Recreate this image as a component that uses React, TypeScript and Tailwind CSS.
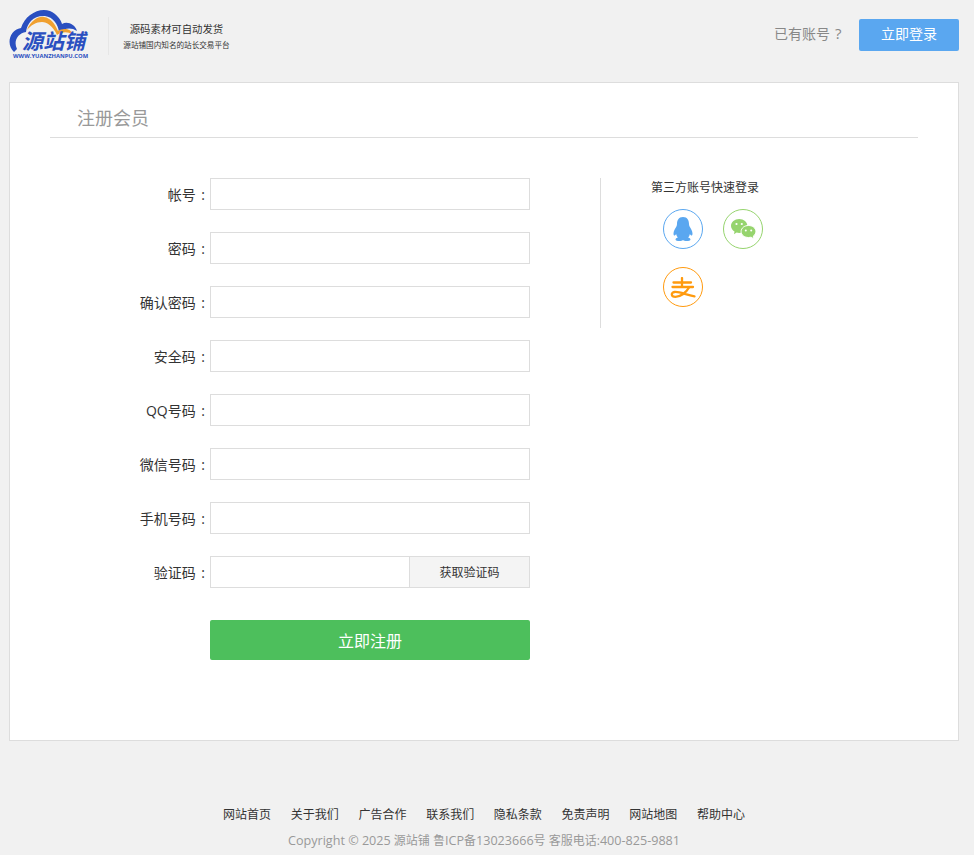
import React from "react";

function Row({ label, children }: { label: string; children?: React.ReactNode }) {
  return (
    <div className="flex h-[32px] mb-[22px]">
      <label className="w-[200px] pr-[5px] pt-[1px] text-right text-[14px] leading-[32px] text-[#333]">
        {label}<span className="ml-[2px]"> :</span>
      </label>
      {children ?? <input className="w-[320px] h-[32px] border border-[#ddd] bg-white" />}
    </div>
  );
}

const links = ["网站首页", "关于我们", "广告合作", "联系我们", "隐私条款", "免责声明", "网站地图", "帮助中心"];

export default function App() {
  return (
    <div className="min-h-[855px] bg-[#f1f1f1] font-['Open_Sans','Noto_Sans_CJK_SC',sans-serif]">
      <header className="h-[82px] flex items-start pl-[9px] pr-[15px]">
        <div className="relative w-[80px] h-[52px] mt-[8px] shrink-0">
          <svg width="80" height="52" viewBox="0 0 80 52" className="absolute left-0 top-0">
            <path d="M5 44 C-3 37 0 22 12 20 C16 7 30 -1 41 3 C48 6 52 12 53 16 C58 13 66 16 68 23 C62 19 56 20 50 24 C49 16 44 9 36 8 C25 7 18 15 17 24 C9 25 4 33 8 41 Z" fill="#2a4fc0" />
            <path d="M18 22 C22 12 30 8 35 9 C42 10 46 16 49 23 C54 20 62 20 64 27 C58 23 53 24 48 27 C44 18 38 14 33 14 C27 14 22 17 18 22 Z" fill="#f0a030" />
          </svg>
          <span className="absolute left-[13px] top-[25px] whitespace-nowrap text-[21px] leading-[17px] font-bold italic text-[#2a4fc0]">源站铺</span>
          <span className="absolute left-[4px] top-[45px] whitespace-nowrap text-[5.8px] leading-[6px] font-bold text-[#2a4fc0]">WWW.YUANZHANPU.COM</span>
        </div>
        <div className="w-px h-[38px] bg-[#e6e6e6] mt-[17px] ml-[19px]" />
        <div className="w-[121px] ml-[7px] mt-[21px] text-center text-[#333]">
          <div className="text-[10.4px] leading-[17px] whitespace-nowrap">源码素材可自动发货</div>
          <div className="text-[7.6px] leading-[12px] whitespace-nowrap mt-[1px]">源站铺国内知名的站长交易平台</div>
        </div>
        <div className="ml-auto flex items-center mt-[18px]">
          <span className="text-[14px] leading-[30px] pb-[2px] text-[#888] w-[85px] whitespace-nowrap">已有账号<span className="ml-[5px] text-[15px]">?</span></span>
          <button className="w-[100px] h-[32px] pb-[2px] rounded-[2px] bg-[#5aa7f0] text-white text-[14px]">立即登录</button>
        </div>
      </header>

      <main className="mx-[9px] w-[950px] h-[659px] border border-[#ddd] bg-white">
        <div className="mx-[40px] h-[55px] border-b border-[#ddd] pl-[27px] pt-[21px] text-[18px] leading-[28px] text-[#999]">注册会员</div>
        <div className="flex mt-[40px]">
          <form className="w-[590px]">
            <Row label="帐号" />
            <Row label="密码" />
            <Row label="确认密码" />
            <Row label="安全码" />
            <Row label="QQ号码" />
            <Row label="微信号码" />
            <Row label="手机号码" />
            <Row label="验证码">
              <div className="flex w-[320px] h-[32px]">
                <input className="w-[200px] h-[32px] border border-[#ddd] bg-white" />
                <button type="button" className="w-[120px] h-[32px] pt-[1px] border border-l-0 border-[#ddd] bg-[#f4f4f4] text-[12px] text-[#333]">获取验证码</button>
              </div>
            </Row>
            <button type="button" className="block ml-[200px] mt-[32px] w-[320px] h-[40px] pt-[1px] rounded-[2px] bg-[#4dbf5c] text-white text-[16px]">立即注册</button>
          </form>
          <aside className="w-[260px] h-[150px] border-l border-[#ddd] pl-[50px]">
            <div className="text-[12px] leading-[18px] pt-[1px] text-[#333] whitespace-nowrap">第三方账号快速登录</div>
            <div className="flex flex-wrap w-[120px] pl-[12px] mt-[12px] gap-x-[20px] gap-y-[18px]">
              <span className="w-[40px] h-[40px] rounded-full border border-[#5aa7f0] flex items-center justify-center">
                <svg width="20" height="24" viewBox="0 0 20 24" fill="#5aa7f0">
                  <path d="M10 0 C14.5 0 16 3.5 16 7 C16 8 16.2 8.6 16.6 9.4 C18 11.5 19.5 14 19.5 16.5 C19.5 18 19 18.7 18.3 18.5 C17.8 18.3 17.3 17.6 16.9 16.9 C16.6 18.5 16 19.7 15.2 20.5 C16.6 21 17.5 21.6 17.5 22.5 C17.5 23.5 15.5 24 13.5 24 C12 24 10.7 23.6 10 23 C9.3 23.6 8 24 6.5 24 C4.5 24 2.5 23.5 2.5 22.5 C2.5 21.6 3.4 21 4.8 20.5 C4 19.7 3.4 18.5 3.1 16.9 C2.7 17.6 2.2 18.3 1.7 18.5 C1 18.7 0.5 18 0.5 16.5 C0.5 14 2 11.5 3.4 9.4 C3.8 8.6 4 8 4 7 C4 3.5 5.5 0 10 0 Z" />
                </svg>
              </span>
              <span className="w-[40px] h-[40px] rounded-full border border-[#96d46e] flex items-center justify-center">
                <svg width="25" height="21" viewBox="0 0 25 21">
                  <path d="M8.2 0 C12.7 0 16.4 3.1 16.4 7 C16.4 10.9 12.7 14 8.2 14 C7.3 14 6.4 13.9 5.6 13.6 L3 15.2 L3.5 12.5 C1.4 11.2 0 9.2 0 7 C0 3.1 3.7 0 8.2 0 Z" fill="#96d46e" />
                  <path d="M17.5 6.5 C21.6 6.5 24.9 9.1 24.9 12.5 C24.9 14.4 23.9 16 22.3 17.1 L23 20 L20.1 18.2 C19.3 18.4 18.4 18.5 17.5 18.5 C13.4 18.5 10.1 15.9 10.1 12.5 C10.1 9.1 13.4 6.5 17.5 6.5 Z" fill="#96d46e" stroke="#fff" strokeWidth="1" />
                  <circle cx="5.5" cy="5" r="1.1" fill="#fff" />
                  <circle cx="10.8" cy="5" r="1.1" fill="#fff" />
                  <circle cx="14.8" cy="11.5" r="1" fill="#fff" />
                  <circle cx="20.2" cy="11.5" r="1" fill="#fff" />
                </svg>
              </span>
              <span className="w-[40px] h-[40px] rounded-full border border-[#ff9a0e] flex items-center justify-center">
                <svg width="26" height="21" viewBox="0 0 26 21" fill="none" stroke="#ff9a0e" strokeWidth="2.3" strokeLinecap="round">
                  <path d="M3.5 5.5 H21" />
                  <path d="M12 1 V9.5" />
                  <path d="M2.5 10 H23" />
                  <path d="M19 10.5 C16 16 10 19.8 5.5 19.8 C1 19.8 0.5 15.5 4.5 15 C10 14.4 16 18 24.5 19.3" />
                </svg>
              </span>
            </div>
          </aside>
        </div>
      </main>

      <footer className="mt-[65px] text-center pr-[6px]">
        <nav className="flex justify-center gap-[19.7px] text-[12px] leading-[18px] text-[#333]">
          {links.map((l) => <a key={l}>{l}</a>)}
        </nav>
        <p className="mt-[8px] text-[12px] leading-[18px] text-[#999]">
          <span className="text-[12.6px]">Copyright © 2025</span> 源站铺 鲁<span className="text-[12.6px]">ICP</span>备<span className="text-[12.6px]">13023666</span>号 客服电话:<span className="text-[12.6px]">400-825-9881</span>
        </p>
      </footer>
    </div>
  );
}
